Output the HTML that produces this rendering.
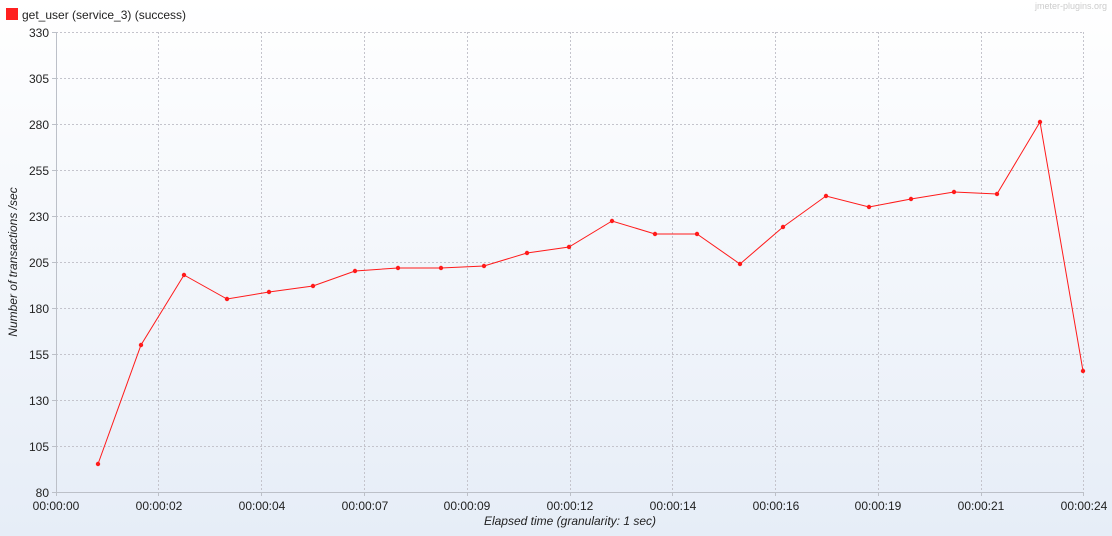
<!DOCTYPE html>
<html><head><meta charset="utf-8"><style>
html,body{margin:0;padding:0;width:1112px;height:536px;overflow:hidden}
body{background:linear-gradient(#ffffff 0%,#e6edf7 100%);font-family:"Liberation Sans",sans-serif}
</style></head><body>
<svg width="1112" height="536" xmlns="http://www.w3.org/2000/svg" style="position:absolute;left:0;top:0;font-family:'Liberation Sans',sans-serif">
<rect x="6" y="8" width="12" height="12" fill="#ff2020"/>
<text x="22" y="19" font-size="12" fill="#222">get_user (service_3) (success)</text>
<text x="1107" y="9" font-size="9" fill="#ccc" text-anchor="end">jmeter-plugins.org</text>
<g stroke="#c4c4cc" stroke-dasharray="2,2" stroke-width="1">
<path d="M56 32.5H1084M56 78.5H1084M56 124.5H1084M56 170.5H1084M56 216.5H1084M56 262.5H1084M56 308.5H1084M56 354.5H1084M56 400.5H1084M56 446.5H1084"/>
<path d="M158.5 32V492M261.5 32V492M364.5 32V492M467.5 32V492M570.5 32V492M672.5 32V492M775.5 32V492M878.5 32V492M981.5 32V492M1083.5 32V492"/>
</g>
<g stroke="#bcc0c8" stroke-width="1">
<path d="M56.5 32V496M52 492.5H1084"/>
<path d="M52 32.5H56M52 78.5H56M52 124.5H56M52 170.5H56M52 216.5H56M52 262.5H56M52 308.5H56M52 354.5H56M52 400.5H56M52 446.5H56"/>
<path d="M158.5 492V496M261.5 492V496M364.5 492V496M467.5 492V496M570.5 492V496M672.5 492V496M775.5 492V496M878.5 492V496M981.5 492V496M1083.5 492V496"/>
</g>
<g font-size="12" fill="#222" text-anchor="end">
<text x="49" y="37">330</text><text x="49" y="83">305</text><text x="49" y="129">280</text><text x="49" y="175">255</text><text x="49" y="221">230</text><text x="49" y="267">205</text><text x="49" y="313">180</text><text x="49" y="359">155</text><text x="49" y="405">130</text><text x="49" y="451">105</text><text x="49" y="497">80</text>
</g>
<g font-size="12" fill="#222" text-anchor="middle">
<text x="56" y="510">00:00:00</text><text x="159" y="510">00:00:02</text><text x="262" y="510">00:00:04</text><text x="365" y="510">00:00:07</text><text x="467" y="510">00:00:09</text><text x="570" y="510">00:00:12</text><text x="673" y="510">00:00:14</text><text x="776" y="510">00:00:16</text><text x="878" y="510">00:00:19</text><text x="981" y="510">00:00:21</text><text x="1084" y="510">00:00:24</text>
</g>
<text x="570" y="525" font-size="12" font-style="italic" fill="#222" text-anchor="middle">Elapsed time (granularity: 1 sec)</text>
<text transform="translate(17,262) rotate(-90)" font-size="12" font-style="italic" fill="#222" text-anchor="middle">Number of transactions /sec</text>
<polyline fill="none" stroke="#ff1a1a" stroke-width="1" points="98,464 141,345 184,275 227,299 269,292 313,286 355,271 398,268 441,268 484,266 527,253 569,247 612,221 655,234 697,234 740,264 783,227 826,196 869,207 911,199 954,192 997,194 1040,122 1083,371"/>
<g fill="#ff1a1a">
<circle cx="98" cy="464" r="2.2"/><circle cx="141" cy="345" r="2.2"/><circle cx="184" cy="275" r="2.2"/><circle cx="227" cy="299" r="2.2"/><circle cx="269" cy="292" r="2.2"/><circle cx="313" cy="286" r="2.2"/><circle cx="355" cy="271" r="2.2"/><circle cx="398" cy="268" r="2.2"/><circle cx="441" cy="268" r="2.2"/><circle cx="484" cy="266" r="2.2"/><circle cx="527" cy="253" r="2.2"/><circle cx="569" cy="247" r="2.2"/><circle cx="612" cy="221" r="2.2"/><circle cx="655" cy="234" r="2.2"/><circle cx="697" cy="234" r="2.2"/><circle cx="740" cy="264" r="2.2"/><circle cx="783" cy="227" r="2.2"/><circle cx="826" cy="196" r="2.2"/><circle cx="869" cy="207" r="2.2"/><circle cx="911" cy="199" r="2.2"/><circle cx="954" cy="192" r="2.2"/><circle cx="997" cy="194" r="2.2"/><circle cx="1040" cy="122" r="2.2"/><circle cx="1083" cy="371" r="2.2"/>
</g>
</svg>
</body></html>
